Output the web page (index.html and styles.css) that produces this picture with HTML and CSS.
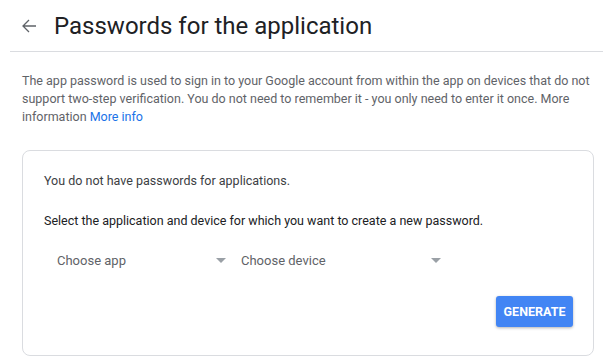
FILE: index.html
```html
<!DOCTYPE html>
<html lang="en">
<head>
    <meta charset="UTF-8">
    <meta name="viewport" content="width=device-width, initial-scale=1.0">
    <title>Passwords for the application</title>
    <link rel="stylesheet" href="styles.css">
</head>
<body>

<!-- Header -->
<div class="header">
    <svg class="back-icon" width="16" height="16" viewBox="0 0 16 16">
        <path d="M15 8H2M8 2L2 8l6 6" fill="none" stroke="#5f6368" stroke-width="1.3"/>
    </svg>
    <h1>Passwords for the application</h1>
</div>

<div class="content">
    <p class="intro">The app password is used to sign in to your Google account from within the app on devices that do not support two-step verification. You do not need to remember it - you only need to enter it once. More information <a href="#" class="link">More info</a></p>

    <!-- Password card -->
    <div class="card">
        <p class="empty">You do not have passwords for applications.</p>
        <p class="select-text">Select the application and device for which you want to create a new password.</p>

        <div class="selects">
            <div class="select select-app">
                <span>Choose app</span>
                <span class="caret"></span>
            </div>
            <div class="select select-device">
                <span>Choose device</span>
                <span class="caret"></span>
            </div>
        </div>

        <div class="actions">
            <button class="btn">GENERATE</button>
        </div>
    </div>
</div>

</body>
</html>
```

FILE: styles.css
```css
body {
    font-family: Roboto, Arial, sans-serif;
    background-color: #fff;
    margin: 0;
    color: #202124;
}
.header {
    display: flex;
    align-items: center;
    height: 51px;
    margin: 0 10px;
    border-bottom: 1px solid #dadce0;
}
.back-icon {
    margin-left: 11px;
    margin-right: 17px;
}
.header h1 {
    font-size: 24px;
    font-weight: 400;
    margin: 0;
    color: #202124;
}
.content {
    padding: 0 19px 0 22px;
}
.intro {
    font-size: 12.5px;
    line-height: 18px;
    color: #5f6368;
    margin: 20px 0 24px;
}
.link {
    color: #1a73e8;
    text-decoration: none;
}
.card {
    border: 1px solid #dadce0;
    border-radius: 8px;
    padding: 22px 20px 28px 21px;
}
.empty {
    font-size: 12.5px;
    color: #3c4043;
    margin: 0 0 25px;
}
.select-text {
    font-size: 12.5px;
    color: #202124;
    margin: 0 0 22px;
}
.selects {
    display: flex;
    gap: 15px;
    padding-left: 13px;
}
.select {
    display: flex;
    align-items: center;
    justify-content: space-between;
    font-size: 13px;
    color: #5f6368;
    height: 20px;
}
.select-app {
    width: 169px;
}
.select-device {
    width: 200px;
}
.caret {
    width: 0;
    height: 0;
    border-left: 5px solid transparent;
    border-right: 5px solid transparent;
    border-top: 5px solid #9aa0a6;
}
.actions {
    display: flex;
    justify-content: flex-end;
    margin-top: 26px;
}
.btn {
    background-color: #4285f4;
    color: white;
    border: none;
    width: 77px;
    height: 31px;
    font-family: Roboto, Arial, sans-serif;
    font-size: 12.5px;
    font-weight: 700;
    border-radius: 3px;
    box-shadow: 0 1px 3px rgba(0, 0, 0, 0.3);
    cursor: pointer;
}
```
